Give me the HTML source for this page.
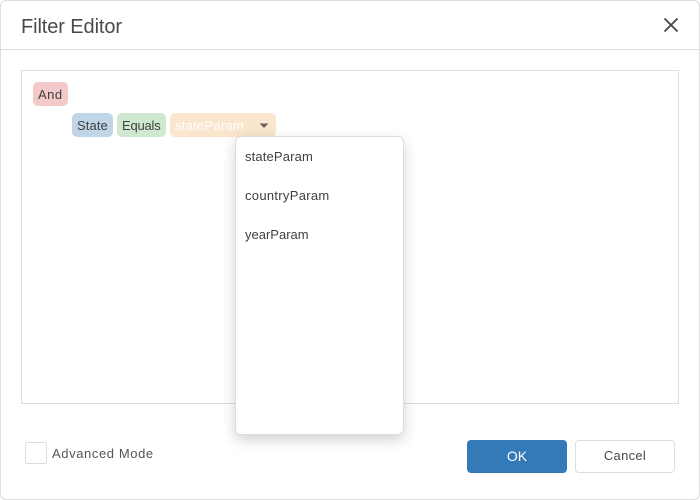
<!DOCTYPE html>
<html>
<head>
<meta charset="utf-8">
<style>
html,body{margin:0;padding:0;width:700px;height:500px;overflow:hidden;background:#fff}
*{box-sizing:border-box}
body{font-family:"Liberation Sans",sans-serif;color:#404040;position:relative}
.a{position:absolute}
.t{position:absolute;white-space:nowrap;font-size:13px;line-height:18px}
.chip{position:absolute;border-radius:5px;height:24px}
</style>
</head>
<body>
<div class="a" style="left:0;top:0;width:700px;height:500px;border:1px solid #dddddd;border-radius:6px"></div>
<div class="a" style="left:1px;top:49px;width:698px;height:1px;background:#dddddd"></div>
<div class="t" style="left:21px;top:15px;font-size:20px;line-height:24px;letter-spacing:-.1px;color:#4a4a4a">Filter Editor</div>
<svg class="a" style="left:663px;top:17px" width="16" height="16" viewBox="0 0 16 16"><path d="M1.5 1.5L14.5 14.5M14.5 1.5L1.5 14.5" stroke="#444444" stroke-width="1.8" fill="none"/></svg>

<div class="a" style="left:21px;top:70px;width:658px;height:334px;border:1px solid #dddddd"></div>

<div class="chip" style="left:33px;top:82px;width:35px;background:#f4c9ca"></div>
<div class="t" style="left:38px;top:86px;letter-spacing:.5px">And</div>

<div class="chip" style="left:72px;top:113px;width:41px;background:#c1d5e9"></div>
<div class="t" style="left:77px;top:117px;letter-spacing:.1px">State</div>

<div class="chip" style="left:117px;top:113px;width:49px;background:#cfe8d0"></div>
<div class="t" style="left:122px;top:117px;letter-spacing:-.2px">Equals</div>

<div class="chip" style="left:170px;top:113px;width:106px;background:#fae6cd"></div>
<div class="t" style="left:175px;top:117px;color:#ffffff;letter-spacing:.25px">stateParam</div>
<svg class="a" style="left:259px;top:123px" width="10" height="6" viewBox="0 0 10 6"><path d="M0.5 0.5H9.5L5 5Z" fill="#6e655c"/></svg>

<div class="a" style="left:235px;top:136px;width:169px;height:299px;background:#fff;border:1px solid #dddddd;border-radius:6px;box-shadow:0 5px 14px rgba(0,0,0,.18)"></div>
<div class="t" style="left:245px;top:148px;letter-spacing:.15px">stateParam</div>
<div class="t" style="left:245px;top:187px;letter-spacing:.3px">countryParam</div>
<div class="t" style="left:245px;top:226px;letter-spacing:0">yearParam</div>

<div class="a" style="left:25px;top:442px;width:22px;height:22px;border:1px solid #dddddd;border-radius:2px"></div>
<div class="t" style="left:52px;top:445px;letter-spacing:.6px;color:#555">Advanced Mode</div>

<div class="a" style="left:467px;top:440px;width:100px;height:33px;background:#337ab7;border-radius:4px"></div>
<div class="t" style="left:467px;top:447px;width:100px;text-align:center;color:#fff;font-size:14px">OK</div>
<div class="a" style="left:575px;top:440px;width:100px;height:33px;border:1px solid #dddddd;border-radius:4px;background:#fff"></div>
<div class="t" style="left:575px;top:447px;width:100px;text-align:center;color:#4a4a4a;letter-spacing:.3px">Cancel</div>
</body>
</html>
